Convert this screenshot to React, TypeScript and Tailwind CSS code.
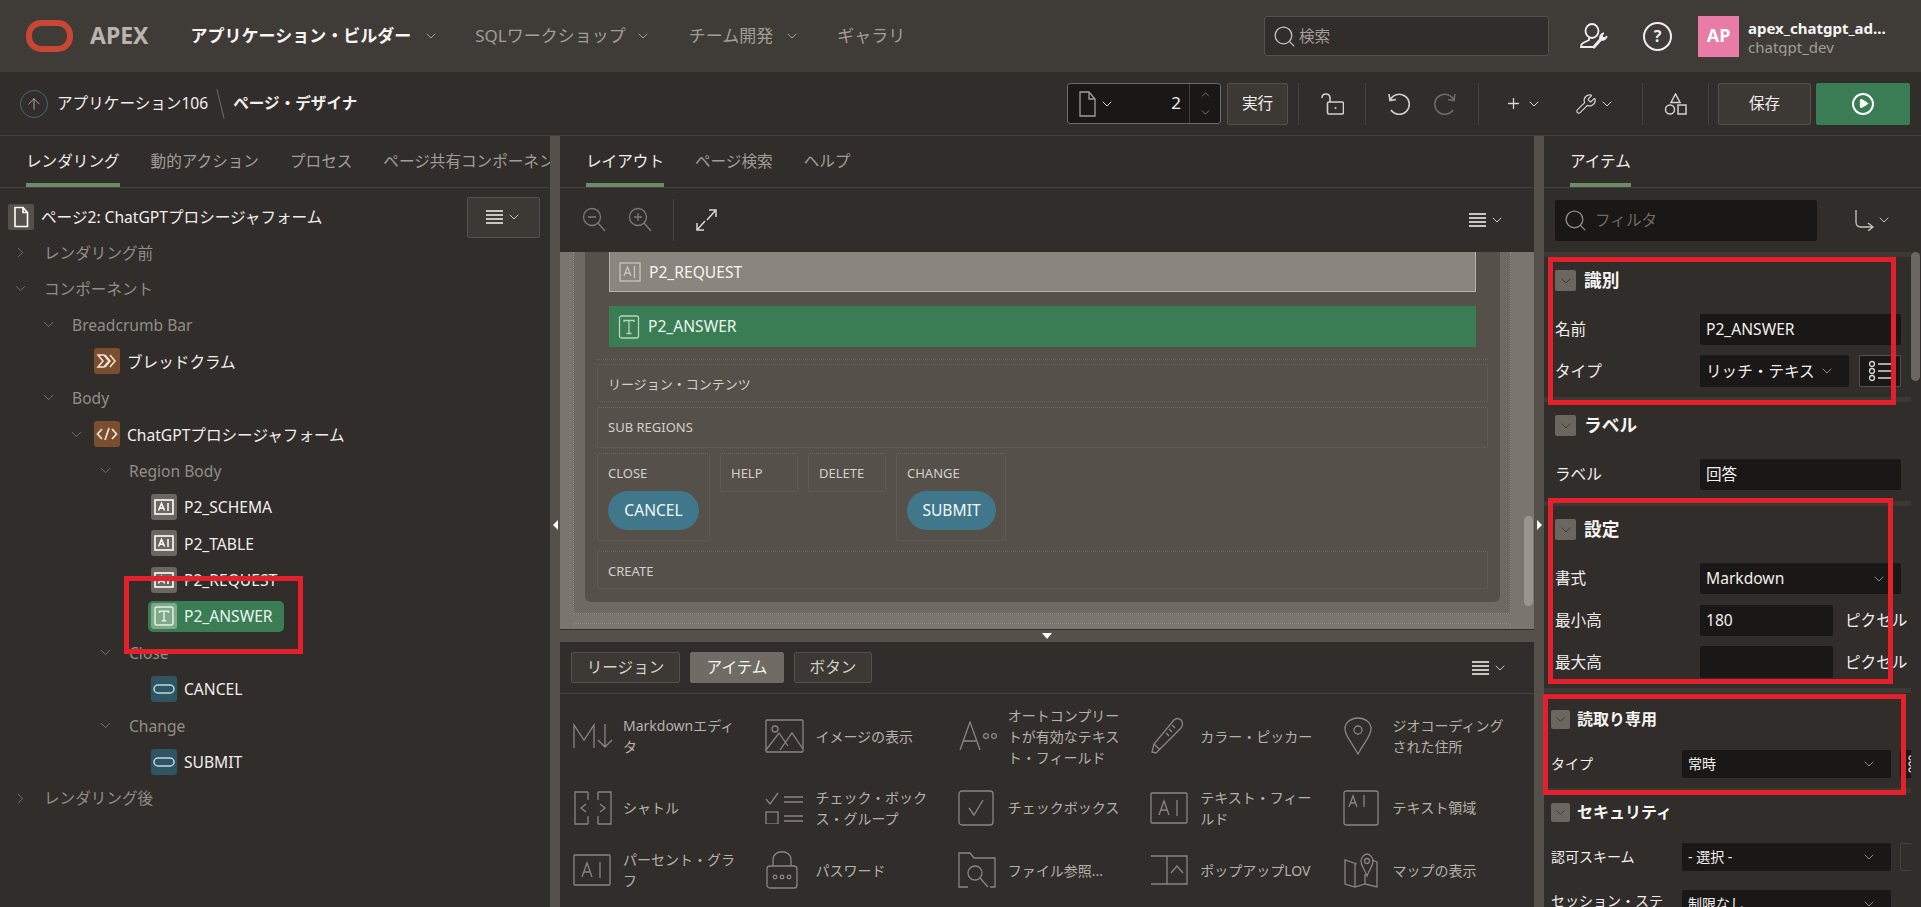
import type { ReactNode } from 'react';
import { ChevronDown, ChevronRight, ChevronUp, Search, Plus, Wrench, ArrowUp, Play } from 'lucide-react';

const FONT = '[font-family:"Noto_Sans","Noto_Sans_CJK_JP",sans-serif]';

function Svg({ w, h, children, className = '' }: { w: number; h: number; children: ReactNode; className?: string }) {
  return (
    <svg width={w} height={h} viewBox={`0 0 ${w} ${h}`} fill="none" stroke="currentColor" strokeWidth={1.3} className={`shrink-0 ${className}`}>
      {children}
    </svg>
  );
}

const Chev = ({ className = '' }: { className?: string }) => <ChevronDown size={16} strokeWidth={1.5} className={`shrink-0 ${className}`} />;

function ListMenu() {
  return (
    <span className="flex items-center gap-[3px] text-[#c9c5bf]">
      <span className="flex w-[17px] flex-col gap-[2px]">
        <span className="h-[2px] bg-current" />
        <span className="h-[2px] bg-current" />
        <span className="h-[2px] bg-current" />
        <span className="h-[2px] bg-current" />
      </span>
      <Chev />
    </span>
  );
}

function Sep() {
  return <span className="block h-[42px] w-px shrink-0 bg-[#45413d]" />;
}

function Tab({ label, active, className = '' }: { label: string; active?: boolean; className?: string }) {
  return (
    <div className={`flex h-[51px] shrink-0 items-center border-b-4 pt-[4px] whitespace-nowrap ${active ? 'border-[#6e8c66] text-[#f1efed]' : 'border-transparent text-[#a19d97]'} ${className}`}>
      {label}
    </div>
  );
}

/* ---------- tree ---------- */
function FieldGlyph() {
  return (
    <Svg w={20} h={16} className="text-white">
      <rect x="1" y="1" width="18" height="14" strokeWidth="1.6" />
      <path d="M4.500 11.500 7.500 4.500l3 7M5.600 9.200h3.800M14 4v8" strokeWidth="1.500" />
    </Svg>
  );
}

function TextGlyph() {
  return (
    <Svg w={20} h={20} className="text-[#e4f0e6]">
      <rect x="1" y="1" width="18" height="18" rx="2" strokeWidth="1.500" />
      <path d="M5.500 7V5.200h9V7M10 5.200v9.600M7.800 14.800h4.400" strokeWidth="1.500" />
    </Svg>
  );
}

function BtnGlyph() {
  return (
    <Svg w={22} h={10} className="text-[#b9dde6]">
      <rect x="1" y="1" width="20" height="8" rx="4" strokeWidth="1.500" />
    </Svg>
  );
}

function TreeIcon({ bg, children }: { bg: string; children: ReactNode }) {
  return <span className={`flex h-[26px] w-[26px] shrink-0 items-center justify-center rounded-[3px] ${bg}`}>{children}</span>;
}

function TreeRow({ pad, open, label, dim, icon, chevGap = 15 }: { pad: number; open?: boolean | null; label: string; dim?: boolean; icon?: ReactNode; chevGap?: number }) {
  return (
    <div className="flex h-[36.4px] items-center" style={{ paddingLeft: pad }}>
      {open === true && <ChevronDown size={17} strokeWidth={1} className="shrink-0 text-[#8f8b85]" style={{ marginRight: chevGap }} />}
      {open === false && <ChevronRight size={17} strokeWidth={1} className="shrink-0 text-[#8f8b85]" style={{ marginRight: chevGap }} />}
      {icon}
      <span className={`whitespace-nowrap pt-px ${dim ? 'text-[#918d87]' : 'text-[#f1efed]'}`} style={{ marginLeft: icon ? 7 : 0 }}>
        {label}
      </span>
    </div>
  );
}

function LeftPanel() {
  const field = (
    <TreeIcon bg="bg-[#6b6660]">
      <FieldGlyph />
    </TreeIcon>
  );
  const btn = (
    <TreeIcon bg="bg-[#2f5563]">
      <BtnGlyph />
    </TreeIcon>
  );
  return (
    <div className="flex w-[550px] shrink-0 flex-col overflow-hidden">
      <div className="flex gap-[31px] border-b border-[#45413d] pl-[26px]">
        <Tab label="レンダリング" active />
        <Tab label="動的アクション" />
        <Tab label="プロセス" />
        <Tab label="ページ共有コンポーネント" />
      </div>
      <div className="flex h-[46px] shrink-0 items-center pt-[11px] pl-[8px]">
        <span className="flex h-[26px] w-[26px] items-center justify-center rounded-[2px] bg-[#55504a] text-white">
          <Svg w={16} h={22}>
            <path d="M2 1.500h8l4.500 5v14H2zM10 1.500v5h4.500" strokeWidth="1.600" />
          </Svg>
        </span>
        <span className="ml-[7px] whitespace-nowrap pt-px text-[#f1efed]">ページ2: ChatGPTプロシージャフォーム</span>
        <span className="mt-[1px] mr-[10px] ml-auto flex h-[41px] w-[73px] items-center justify-center rounded-[2px] border border-[#55504a] bg-[#3c3935]">
          <ListMenu />
        </span>
      </div>
      <div>
        <TreeRow pad={12} open={false} label="レンダリング前" dim />
        <TreeRow pad={12} open label="コンポーネント" dim />
        <TreeRow pad={40} open label="Breadcrumb Bar" dim />
        <TreeRow
          pad={94}
          label="ブレッドクラム"
          icon={
            <TreeIcon bg="bg-[#7a4e2f]">
              <Svg w={22} h={16} className="text-[#f6e6d6]">
                <path d="M2 2h6l5 6-5 6H2l5-6zM9 2l5 6-5 6M14 2l5 6-5 6" strokeWidth="1.500" />
              </Svg>
            </TreeIcon>
          }
        />
        <TreeRow pad={40} open label="Body" dim />
        <TreeRow
          pad={68}
          open
          chevGap={9}
          label="ChatGPTプロシージャフォーム"
          icon={
            <TreeIcon bg="bg-[#7a4e2f]">
              <Svg w={22} h={14} className="text-[#f6e6d6]">
                <path d="M6 2 1.500 7 6 12M16 2l4.500 5-4.500 5M13 1 9 13" strokeWidth="1.700" />
              </Svg>
            </TreeIcon>
          }
        />
        <TreeRow pad={97} open label="Region Body" dim />
        <TreeRow pad={151} label="P2_SCHEMA" icon={field} />
        <TreeRow pad={151} label="P2_TABLE" icon={field} />
        <TreeRow pad={151} label="P2_REQUEST" icon={field} />
        <div className="flex h-[36.4px] items-center pl-[148px]">
          <div className="flex h-[31px] w-[136px] items-center rounded-[5px] bg-[#3a7d54] pl-[3px] text-[#e9f5ec]">
            <span className="flex h-[26px] w-[26px] items-center justify-center rounded-[3px] bg-[#7faa88]">
              <TextGlyph />
            </span>
            <span className="ml-[7px] pt-px">P2_ANSWER</span>
          </div>
        </div>
        <TreeRow pad={97} open label="Close" dim />
        <TreeRow pad={151} label="CANCEL" icon={btn} />
        <TreeRow pad={97} open label="Change" dim />
        <TreeRow pad={151} label="SUBMIT" icon={btn} />
        <TreeRow pad={12} open={false} label="レンダリング後" dim />
      </div>
    </div>
  );
}

/* ---------- splitters ---------- */
function Splitter({ dir, top }: { dir: 'l' | 'r'; top: number }) {
  return (
    <div className="w-[10px] shrink-0 bg-[#55504a]">
      <div
        className={`mx-auto h-0 w-0 border-y-[5px] border-y-transparent ${dir === 'l' ? 'border-r-[5px] border-r-white' : 'border-l-[5px] border-l-white'}`}
        style={{ marginTop: top }}
      />
    </div>
  );
}

/* ---------- centre ---------- */
function Dotted({ label, className = '', children }: { label: string; className?: string; children?: ReactNode }) {
  return (
    <div className={`rounded-[2px] border border-dotted border-[#6a655e] px-[10px] ${className}`}>
      <div className="flex h-[36px] items-center pt-[2px] text-[13px] whitespace-nowrap text-[#d4d0ca]">{label}</div>
      {children}
    </div>
  );
}

function Pill({ label, w }: { label: string; w: string }) {
  return <div className={`mt-px flex h-[39px] items-center justify-center rounded-[20px] bg-[#41778a] text-[#f1f8fa] ${w}`}>{label}</div>;
}

function Canvas() {
  return (
    <div className="flex h-[378px] shrink-0 border-b border-[#312d2a] bg-[#7a756e]">
      <div className="flex min-w-0 flex-1 flex-col pl-[13px]">
        <div className="h-[362px] w-[938px] shrink-0 border-x border-b border-dotted border-[#8f8a83] bg-[#6e6962] pl-[11px]">
          <div className="h-[350px] w-[915px] rounded-b-[6px] bg-[#55504a] px-[12px]">
            <div className="border-b border-dotted border-[#6a655e] px-[12px] pb-[12px]">
              <div className="flex h-[40px] items-center border border-t-0 border-[#b5b0a9] bg-[#8a857d] pl-[9px] text-[#f6f5f3]">
                <Svg w={22} h={20} className="text-[#c9c5bf]">
                  <rect x="1" y="1" width="20" height="18" />
                  <path d="M5 14 8.500 5l3.500 9M6.200 11h4.600M15.500 4v12" />
                </Svg>
                <span className="ml-[8px] pt-px">P2_REQUEST</span>
              </div>
              <div className="mt-[14px] flex h-[41px] items-center bg-[#3a7d54] pl-[9px] text-[#ebf6ee]">
                <Svg w={22} h={24} className="text-[#b5d6bd]">
                  <rect x="1.500" y="1" width="19" height="22" rx="2" />
                  <path d="M6 7V5.500h10V7M11 5.500v13M8.500 18.500h5" />
                </Svg>
                <span className="ml-[8px]">P2_ANSWER</span>
              </div>
            </div>
            <Dotted label="リージョン・コンテンツ" className="mt-[4px]" />
            <Dotted label="SUB REGIONS" className="mt-[5px] h-[41px]" />
            <div className="mt-[5px] flex items-start gap-[10px]">
              <Dotted label="CLOSE" className="h-[88px] w-[113px]">
                <Pill label="CANCEL" w="w-[91px]" />
              </Dotted>
              <Dotted label="HELP" className="h-[39px] w-[78px]" />
              <Dotted label="DELETE" className="h-[39px] w-[78px]" />
              <Dotted label="CHANGE" className="h-[88px] w-[110px]">
                <Pill label="SUBMIT" w="w-[89px]" />
              </Dotted>
            </div>
            <Dotted label="CREATE" className="mt-[10px]" />
          </div>
        </div>
        <div className="mt-[9px] h-[6px] w-[938px] shrink-0 rounded-t-[3px] border-x border-t border-dotted border-[#8f8a83]" />
      </div>
      <div className="w-[10px] shrink-0 pt-[264px]">
        <div className="h-[90px] w-[9px] rounded-[5px] bg-[#9a958e]" />
      </div>
    </div>
  );
}

type PaletteItem = { label: string; icon: ReactNode };

const paletteItems: PaletteItem[] = [
  {
    label: 'Markdownエディ\nタ',
    icon: (
      <Svg w={42} h={26}>
        <path d="M1 25V2l10 15L21 2v23M32 1v23M25 17l7 7 7-7" />
      </Svg>
    ),
  },
  {
    label: 'イメージの表示',
    icon: (
      <Svg w={40} h={34}>
        <rect x="1" y="1" width="37" height="32" rx="1" />
        <circle cx="10" cy="10" r="3" />
        <path d="M1 31 14 14l9 13M15 31 27 14l11 16" />
      </Svg>
    ),
  },
  {
    label: 'オートコンプリー\nトが有効なテキス\nト・フィールド',
    icon: (
      <Svg w={40} h={30}>
        <path d="M2 29 12 1l10 28M5 20h14" />
        <circle cx="28" cy="15" r="2.400" />
        <circle cx="36" cy="15" r="2.400" />
      </Svg>
    ),
  },
  {
    label: 'カラー・ピッカー',
    icon: (
      <Svg w={40} h={38}>
        <path d="M6 36 2 35l2-8L24 3c2-2 5-2 7 0s2 5 0 8L9 33zM4 27l6 6M22 8l3 3M19 12l3 3M16 16l3 3" />
      </Svg>
    ),
  },
  {
    label: 'ジオコーディング\nされた住所',
    icon: (
      <Svg w={34} h={38}>
        <path d="M15 37C8 24 2 19 2 12 2 5.500 8 1 15 1s13 4.500 13 11c0 7-6 12-13 25z" />
        <circle cx="15" cy="13" r="4" />
      </Svg>
    ),
  },
  {
    label: 'シャトル',
    icon: (
      <Svg w={40} h={34}>
        <path d="M15 1H2v32h13M25 1h13v32H25M15 1v8M15 25v8M25 1v8M25 25v8M13 13l-5 4 5 4M27 13l5 4-5 4" />
      </Svg>
    ),
  },
  {
    label: 'チェック・ボック\nス・グループ',
    icon: (
      <Svg w={40} h={32}>
        <path d="M1 7l4 5 8-11M19 5h19M19 10h19M19 24h19M19 29h19" />
        <rect x="1" y="20" width="12" height="12" />
      </Svg>
    ),
  },
  {
    label: 'チェックボックス',
    icon: (
      <Svg w={38} h={36}>
        <rect x="1" y="1" width="34" height="34" rx="3" />
        <path d="M11 18l5 7 9-15" />
      </Svg>
    ),
  },
  {
    label: 'テキスト・フィー\nルド',
    icon: (
      <Svg w={40} h={32}>
        <rect x="1" y="1" width="36" height="30" rx="1" />
        <path d="M9 23 14 9l5 14M11 18h6M27 8v16" />
      </Svg>
    ),
  },
  {
    label: 'テキスト領域',
    icon: (
      <Svg w={38} h={36}>
        <rect x="1" y="1" width="34" height="34" rx="2" />
        <path d="M6 17l4-11 4 11M7.500 13h5M21 5v12" />
      </Svg>
    ),
  },
  {
    label: 'パーセント・グラ\nフ',
    icon: (
      <Svg w={40} h={32}>
        <rect x="1" y="1" width="36" height="30" rx="1" />
        <path d="M9 23 14 9l5 14M11 18h6M27 8v16" />
      </Svg>
    ),
  },
  {
    label: 'パスワード',
    icon: (
      <Svg w={36} h={38}>
        <rect x="2" y="15" width="30" height="22" rx="3" />
        <path d="M8 15V9c0-11 18-11 18 0v6" />
        <circle cx="10" cy="26" r="1.800" />
        <circle cx="17" cy="26" r="1.800" />
        <circle cx="24" cy="26" r="1.800" />
      </Svg>
    ),
  },
  {
    label: 'ファイル参照...',
    icon: (
      <Svg w={40} h={36}>
        <path d="M10 35H1V1h11l4 5h21v29h-5" />
        <circle cx="17" cy="21" r="7" />
        <path d="m22 26 8 9" />
      </Svg>
    ),
  },
  {
    label: 'ポップアップLOV',
    icon: (
      <Svg w={40} h={30}>
        <path d="M1 1h36v28H1M17 1v28M21 18l6-7 6 7" />
      </Svg>
    ),
  },
  {
    label: 'マップの表示',
    icon: (
      <Svg w={40} h={36}>
        <path d="M14 12 2 8v24l10 3 10-3 12 3V10l-5-2M12 12v23M22 22v10" />
        <path d="M24 24c-3-8-6-10-6-15 0-3 3-7 6-7s6 4 6 7c0 5-3 7-6 15z" />
        <circle cx="24" cy="9" r="2.500" />
      </Svg>
    ),
  },
];

function PaletteBtn({ label, active, className = '' }: { label: string; active?: boolean; className?: string }) {
  return (
    <span className={`flex h-[31px] items-center justify-center rounded-[2px] border ${active ? 'border-[#706b64] bg-[#706b64] text-[#f6f5f3]' : 'border-[#55504a] bg-[#3c3935] text-[#d4d0ca]'} ${className}`}>
      {label}
    </span>
  );
}

function Palette() {
  return (
    <div className="flex min-h-0 flex-1 flex-col">
      <div className="flex h-[52px] shrink-0 items-center gap-[10px] border-b border-[#45413d] pr-[26px] pl-[11px]">
        <PaletteBtn label="リージョン" className="w-[109px]" />
        <PaletteBtn label="アイテム" active className="w-[94px]" />
        <PaletteBtn label="ボタン" className="w-[78px]" />
        <span className="ml-auto">
          <ListMenu />
        </span>
      </div>
      <div className="flex min-h-0 flex-1 overflow-hidden">
        <div className="grid flex-1 grid-cols-[repeat(5,192.400px)] grid-rows-[84px_59px_66px] pl-[13px] text-[14px] leading-[21px] text-[#b5b1ab]">
          {paletteItems.map((it) => (
            <div key={it.label} className="flex items-center text-[#8a8580]">
              <span className="flex w-[50px] shrink-0">{it.icon}</span>
              <span className="w-[124px] whitespace-pre-line text-[#b5b1ab]">{it.label}</span>
            </div>
          ))}
        </div>
        <div className="w-[10px] shrink-0 pt-px">
          <div className="h-[128px] w-[9px] rounded-[5px] bg-[#5f5a54]" />
        </div>
      </div>
    </div>
  );
}

function CenterPanel() {
  return (
    <div className="flex w-[974px] shrink-0 flex-col overflow-hidden">
      <div className="flex gap-[31px] border-b border-[#45413d] pl-[26px]">
        <Tab label="レイアウト" active />
        <Tab label="ページ検索" />
        <Tab label="ヘルプ" />
      </div>
      <div className="flex h-[64px] shrink-0 items-center pr-[29px] pl-[22px] text-[#7e7973]">
        <Svg w={24} h={26}>
          <circle cx="10" cy="10" r="8.500" />
          <path d="M6 10h8M16 16l7 8" />
        </Svg>
        <Svg w={24} h={26} className="ml-[22px]">
          <circle cx="10" cy="10" r="8.500" />
          <path d="M6 10h8M10 6v8M16 16l7 8" />
        </Svg>
        <span className="mx-[21px] h-[42px] w-px bg-[#45413d]" />
        <Svg w={22} h={24} className="text-[#dad7d2]">
          <path d="M12 12 20 3M14 2h7v7M10 13l-8 9M2 15v7h7" strokeWidth="1.500" />
        </Svg>
        <span className="ml-auto">
          <ListMenu />
        </span>
      </div>
      <Canvas />
      <div className="flex h-[12px] shrink-0 items-center justify-center bg-[#55504a]">
        <span className="h-0 w-0 border-x-[5px] border-t-[6px] border-x-transparent border-t-white" />
      </div>
      <Palette />
    </div>
  );
}

/* ---------- right ---------- */
function Toggle({ small }: { small?: boolean }) {
  return (
    <span className={`flex shrink-0 items-center justify-center rounded-[2px] bg-[#6b6660] text-[#312d2a] ${small ? 'h-[19px] w-[19px]' : 'h-[21px] w-[21px]'}`}>
      <ChevronDown size={small ? 15 : 16} strokeWidth={1.2} />
    </span>
  );
}

function SectionHead({ label, small }: { label: string; small?: boolean }) {
  return (
    <div className={`flex items-center ${small ? 'h-[19px] gap-[7px] text-[16px]' : 'h-[21px] gap-[8px] text-[17.700px]'} font-bold text-[#f6f5f3]`}>
      <Toggle small={small} />
      <span className="whitespace-nowrap">{label}</span>
    </div>
  );
}

function Input({ value, w, select, h = 'h-[31px]' }: { value?: string; w: string; select?: boolean; h?: string }) {
  return (
    <div className={`flex shrink-0 items-center overflow-hidden rounded-[2px] bg-[#1a1816] pl-[6px] whitespace-nowrap text-[#f1efed] ${w} ${h}`}>
      <span className="min-w-0 flex-1 overflow-hidden">{value}</span>
      {select && <ChevronDown size={16} strokeWidth={1} className="mr-[14px] ml-[5px] shrink-0 text-[#c9c5bf]" />}
    </div>
  );
}

function Divider() {
  return <div className="h-[5px] bg-[#3c3935]" />;
}

function RightPanel() {
  return (
    <div className="flex min-w-0 flex-1 flex-col overflow-hidden">
      <div className="border-b border-[#45413d] pl-[26px]">
        <Tab label="アイテム" active className="w-fit" />
      </div>
      <div className="flex h-[64px] shrink-0 items-center pl-[11px]">
        <div className="flex h-[41px] w-[262px] items-center rounded-[2px] bg-[#1a1816] pl-[8px] text-[#6f6a63]">
          <Search size={25} strokeWidth={1.3} className="text-[#8f8b85]" />
          <span className="ml-[7px]">フィルタ</span>
        </div>
        <span className="ml-[37px] flex items-center gap-[2px] text-[#c9c5bf]">
          <Svg w={20} h={22}>
            <path d="M2 1v12c0 4 2 5 5 5h12M14 14l5 4-5 4" />
          </Svg>
          <Chev />
        </span>
      </div>
      <div className="flex min-h-0 flex-1">
        <div className="min-w-0 flex-1 overflow-hidden">
          <Divider />
          <div className="pt-[13px] pl-[11px]">
            <SectionHead label="識別" />
            <div className="mt-[23px] flex items-center">
              <span className="w-[145px] shrink-0 text-[#f1efed]">名前</span>
              <Input value="P2_ANSWER" w="w-[201px]" />
            </div>
            <div className="mt-[10px] flex items-center">
              <span className="w-[145px] shrink-0 text-[#f1efed]">タイプ</span>
              <Input value="リッチ・テキスト・エディタ" w="w-[149px]" select h="h-[32px]" />
              <span className="ml-[10px] flex h-[32px] w-[42px] items-center justify-center rounded-[2px] border border-[#55504a] bg-[#1a1816] text-[#dad7d2]">
                <Svg w={24} h={22}>
                  <circle cx="4" cy="4" r="2.500" />
                  <circle cx="4" cy="11" r="2.500" />
                  <circle cx="4" cy="18" r="2.500" />
                  <path d="M10 4h14M10 11h14M10 18h14" />
                </Svg>
              </span>
            </div>
          </div>
          <div className="mt-[10px]">
            <Divider />
          </div>
          <div className="pt-[13px] pl-[11px]">
            <SectionHead label="ラベル" />
            <div className="mt-[23px] flex items-center">
              <span className="w-[145px] shrink-0 text-[#f1efed]">ラベル</span>
              <Input value="回答" w="w-[201px]" />
            </div>
          </div>
          <div className="mt-[11px]">
            <Divider />
          </div>
          <div className="pt-[13px] pl-[11px]">
            <SectionHead label="設定" />
            <div className="mt-[23px] flex items-center">
              <span className="w-[145px] shrink-0 text-[#f1efed]">書式</span>
              <Input value="Markdown" w="w-[201px]" select />
            </div>
            <div className="mt-[11px] flex items-center">
              <span className="w-[145px] shrink-0 text-[#f1efed]">最小高</span>
              <Input value="180" w="w-[133px]" />
              <span className="ml-[12px] whitespace-nowrap text-[#f1efed]">ピクセル</span>
            </div>
            <div className="mt-[10px] flex items-center">
              <span className="w-[145px] shrink-0 text-[#f1efed]">最大高</span>
              <Input w="w-[133px]" h="h-[32px]" />
              <span className="ml-[12px] whitespace-nowrap text-[#f1efed]">ピクセル</span>
            </div>
          </div>
          <div className="mt-[10px]">
            <Divider />
          </div>
          <div className="pt-[17px] pl-[7px]">
            <SectionHead label="読取り専用" small />
            <div className="mt-[21px] flex items-center text-[14px]">
              <span className="w-[131px] shrink-0 text-[#f1efed]">タイプ</span>
              <Input value="常時" w="w-[209px]" select h="h-[28px]" />
              <span className="ml-[9px] flex h-[28px] w-[30px] shrink-0 items-center overflow-hidden rounded-[2px] bg-[#1a1816] pl-[8px] text-[#dad7d2]">
                <Svg w={22} h={18}>
                  <circle cx="3" cy="3" r="2" />
                  <circle cx="3" cy="9" r="2" />
                  <circle cx="3" cy="15" r="2" />
                  <path d="M8 3h14M8 9h14M8 15h14" />
                </Svg>
              </span>
            </div>
          </div>
          <div className="mt-[10px]">
            <Divider />
          </div>
          <div className="pt-[10px] pl-[7px]">
            <SectionHead label="セキュリティ" small />
            <div className="mt-[21px] flex items-center text-[14px]">
              <span className="w-[131px] shrink-0 text-[#f1efed]">認可スキーム</span>
              <Input value="- 選択 -" w="w-[209px]" select h="h-[28px]" />
              <span className="ml-[9px] flex h-[28px] w-[30px] shrink-0 items-center overflow-hidden rounded-[2px] border border-[#45413d] pl-[12px] text-[#8f8b85]">×</span>
            </div>
            <div className="mt-[19px] flex items-start text-[14px]">
              <span className="w-[131px] shrink-0 pr-[10px] leading-[22px] text-[#f1efed]">セッション・ステート保護</span>
              <Input value="制限なし" w="w-[209px]" select h="h-[28px]" />
            </div>
          </div>
        </div>
        <div className="w-[10px] shrink-0">
          <div className="h-[129px] w-[9px] rounded-[5px] bg-[#6b6660]" />
        </div>
      </div>
    </div>
  );
}

/* ---------- annotations ---------- */
function RedBox({ className }: { className: string }) {
  return <div className={`pointer-events-none absolute border-[5px] border-[#e3202c] ${className}`} />;
}

export default function App() {
  return (
    <div className={`relative flex h-[907px] w-[1921px] flex-col overflow-hidden bg-[#312d2a] text-[15.600px] leading-[1.3] ${FONT}`}>
      <header className="flex h-[72px] shrink-0 items-center bg-[#3f3c38] pr-[24px] pl-[26px] text-[17px]">
        <Svg w={47} h={32} className="text-[#c74634]">
          <rect x="3" y="3" width="41" height="26" rx="12" strokeWidth="6" />
        </Svg>
        <span className="ml-[17px] text-[23px] font-bold text-[#b8b4ae]">APEX</span>
        <span className="ml-[42px] font-bold whitespace-nowrap text-[#f6f5f3]">アプリケーション・ビルダー</span>
        <Chev className="ml-[12px] text-[#a19d97]" />
        <span className="ml-[36px] whitespace-nowrap text-[#a19d97]">SQLワークショップ</span>
        <Chev className="ml-[9px] text-[#a19d97]" />
        <span className="ml-[38px] whitespace-nowrap text-[#a19d97]">チーム開発</span>
        <Chev className="ml-[11px] text-[#a19d97]" />
        <span className="ml-[37px] whitespace-nowrap text-[#a19d97]">ギャラリ</span>
        <div className="ml-auto flex h-[40px] w-[285px] items-center rounded-[3px] border border-[#55504a] bg-[#312d2a] pl-[7px] text-[15.600px] text-[#a19d97]">
          <Search size={25} strokeWidth={1.2} className="text-[#c9c5bf]" />
          <span className="ml-[2px]">検索</span>
        </div>
        <span className="ml-[31px] text-[#f1efed]">
          <Svg w={28} h={26}>
            <ellipse cx="12" cy="8" rx="6.500" ry="7" strokeWidth="1.800" />
            <path d="M9 15v2l-6 3c-2 1-2 3-2 4h13" strokeWidth="1.800" />
            <path d="M14 24l7-8" strokeWidth="3" strokeLinecap="round" />
            <path d="M20 16c-1-3 1-6 4-6l-2 3 2 2 3-2c0 3-3 5-6 4z" fill="currentColor" strokeWidth="1" />
          </Svg>
        </span>
        <span className="ml-[35px] flex h-[29px] w-[29px] shrink-0 items-center justify-center rounded-full border-2 border-[#f1efed] text-[16px] font-bold text-[#f1efed]">?</span>
        <span className="ml-[26px] flex h-[41px] w-[41px] shrink-0 items-center justify-center bg-[#e87ca6] text-[18px] font-bold text-white">AP</span>
        <div className="ml-[9px] flex w-[149px] flex-col pt-[1px]">
          <span className="truncate text-[15px] leading-[20px] font-bold text-[#f6f5f3]">apex_chatgpt_admin</span>
          <span className="truncate text-[15px] leading-[18px] text-[#a19d97]">chatgpt_dev</span>
        </div>
      </header>

      <div className="flex h-[64px] shrink-0 items-center border-b border-[#45413d] pr-[11px] pl-[20px] text-[#dad7d2]">
        <span className="flex h-[28px] w-[28px] items-center justify-center rounded-full border border-[#3e6a78] text-[#b9b5af]">
          <ArrowUp size={18} strokeWidth={1.2} />
        </span>
        <span className="ml-[9px] whitespace-nowrap text-[#f1efed]">アプリケーション106</span>
        <span className="mx-[12px] h-[30px] w-px rotate-[-14deg] bg-[#6f6a63]" />
        <span className="font-bold whitespace-nowrap text-[#f1efed]">ページ・デザイナ</span>

        <div className="ml-auto flex h-[41px] w-[154px] items-center rounded-[3px] border border-[#6f6a63] bg-[#1a1816] pl-[11px]">
          <Svg w={17} h={26} className="text-[#a19d97]">
            <path d="M1 1h9l6 7v17H1zM10 1v7h6" />
          </Svg>
          <Chev className="ml-[3px]" />
          <span className="ml-auto pr-[8px] text-[17px] text-[#f1efed]">2</span>
          <span className="flex h-full w-[31px] flex-col items-center justify-center gap-[5px] border-l border-[#45413d] text-[#a19d97]">
            <ChevronUp size={13} strokeWidth={1.2} />
            <ChevronDown size={13} strokeWidth={1.2} />
          </span>
        </div>
        <span className="ml-[6px] flex h-[42px] w-[61px] items-center justify-center rounded-[2px] border border-[#55504a] bg-[#3c3935] text-[#f1efed]">実行</span>
        <span className="ml-[10px]">
          <Sep />
        </span>
        <span className="ml-[22px]">
          <Svg w={23} h={22} className="text-[#d4d0ca]">
            <rect x="6.500" y="9" width="16" height="12" rx="1.500" strokeWidth="1.600" />
            <path d="M1 5c0-5 8-5.500 8 0v4" strokeWidth="1.600" />
            <circle cx="14.500" cy="15" r="1" fill="currentColor" stroke="none" />
          </Svg>
        </span>
        <span className="ml-[21px]">
          <Sep />
        </span>
        <Svg w={22} h={22} className="ml-[22px] text-[#d4d0ca]">
          <path d="M2 7.500A10 10 0 1 1 3 17M1 1l1 6.500 6-1" strokeWidth="1.600" />
        </Svg>
        <Svg w={22} h={22} className="ml-[24px] -scale-x-100 text-[#6f6a63]">
          <path d="M2 7.500A10 10 0 1 1 3 17M1 1l1 6.500 6-1" strokeWidth="1.600" />
        </Svg>
        <span className="ml-[22px]">
          <Sep />
        </span>
        <Plus size={17} strokeWidth={1.8} className="ml-[26px] text-[#dad7d2]" />
        <Chev className="ml-[4px]" />
        <Wrench size={22} strokeWidth={1.3} className="ml-[33px] text-[#d4d0ca]" />
        <Chev className="ml-[2px]" />
        <span className="ml-[27px]">
          <Sep />
        </span>
        <span className="ml-[21px] text-[#d4d0ca]">
          <Svg w={23} h={22}>
            <path d="M11.500 1 7 9.500h9z" strokeWidth="1.500" />
            <circle cx="6" cy="16.500" r="4.500" strokeWidth="1.500" />
            <rect x="14" y="12" width="8" height="9" strokeWidth="1.500" />
          </Svg>
        </span>
        <span className="ml-[21px]">
          <Sep />
        </span>
        <span className="ml-[9px] flex h-[42px] w-[93px] items-center justify-center rounded-[2px] border border-[#55504a] bg-[#3c3935] text-[#f1efed]">保存</span>
        <span className="ml-[5px] flex h-[42px] w-[94px] items-center justify-center rounded-[2px] bg-[#3a7d54] text-white">
          <span className="flex h-[22px] w-[22px] items-center justify-center rounded-full border-2 border-white">
            <Play size={11} fill="currentColor" className="ml-[1px]" />
          </span>
        </span>
      </div>

      <div className="flex min-h-0 flex-1">
        <LeftPanel />
        <Splitter dir="l" top={384} />
        <CenterPanel />
        <Splitter dir="r" top={384} />
        <RightPanel />
      </div>

      <RedBox className="top-[576px] left-[124px] h-[78px] w-[179px]" />
      <RedBox className="top-[257px] left-[1548px] h-[148px] w-[348px]" />
      <RedBox className="top-[498px] left-[1548px] h-[186px] w-[345px]" />
      <RedBox className="top-[694px] left-[1543px] h-[101px] w-[363px]" />
    </div>
  );
}
